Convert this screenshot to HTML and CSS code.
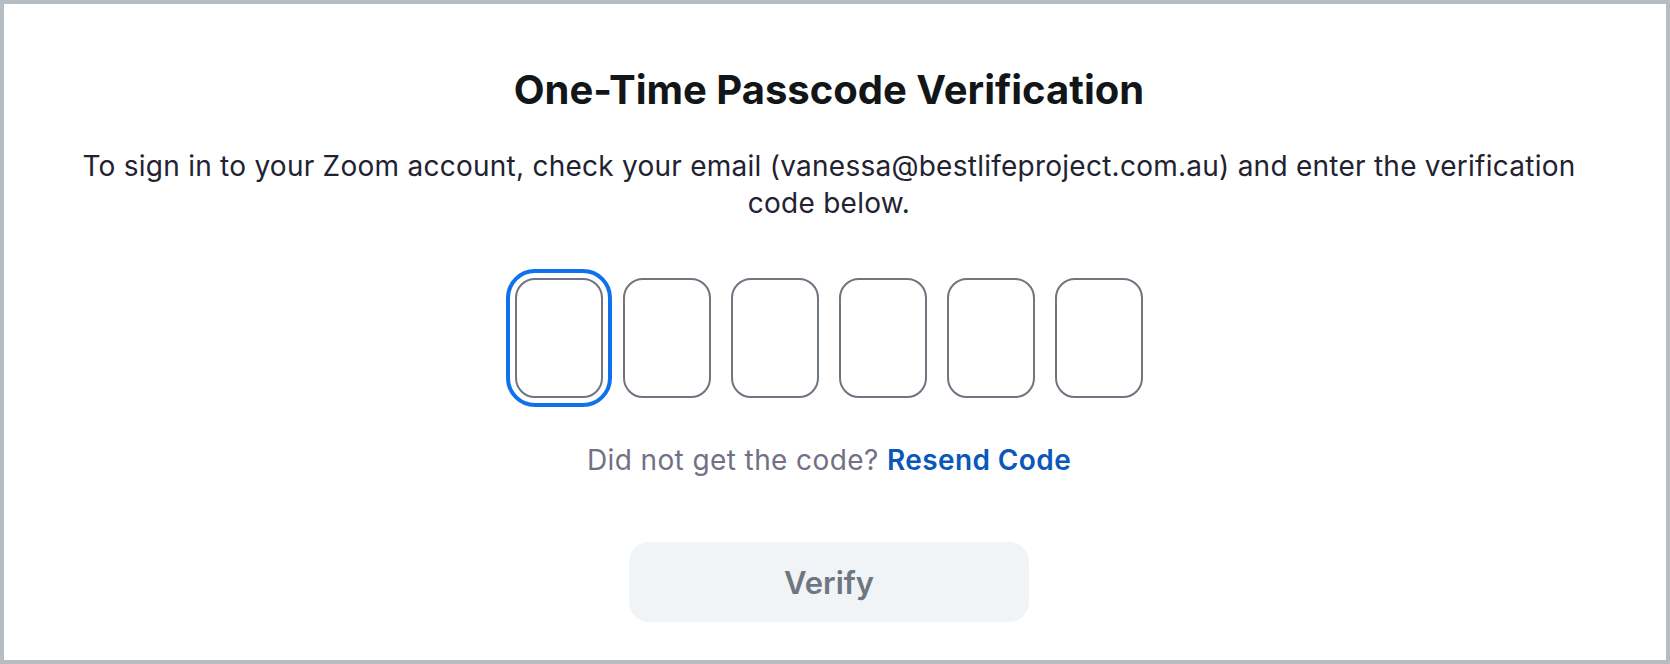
FILE: index.html
```html
<!DOCTYPE html>
<html lang="en">
<head>
<meta charset="utf-8">
<title>One-Time Passcode Verification</title>
<link rel="stylesheet" href="styles.css">
</head>
<body>
<div class="frame">
  <main class="content">
    <h1 class="title">One-Time Passcode Verification</h1>
    <p class="desc">To sign in to your Zoom account, check your email (vanessa@bestlifeproject.com.au) and enter the verification code below.</p>
    <div class="otp">
      <input class="otp-box is-focused" type="text" maxlength="1" aria-label="Digit 1">
      <input class="otp-box" type="text" maxlength="1" aria-label="Digit 2">
      <input class="otp-box" type="text" maxlength="1" aria-label="Digit 3">
      <input class="otp-box" type="text" maxlength="1" aria-label="Digit 4">
      <input class="otp-box" type="text" maxlength="1" aria-label="Digit 5">
      <input class="otp-box" type="text" maxlength="1" aria-label="Digit 6">
    </div>
    <p class="resend">Did not get the code? <a class="resend-link" href="#">Resend Code</a></p>
    <button class="verify" type="button" disabled>Verify</button>
  </main>
</div>
</body>
</html>
```

FILE: styles.css
```css
* { box-sizing: border-box; }
html, body { margin: 0; padding: 0; background: #ffffff; }
body { font-family: Inter, "Noto Sans", "Liberation Sans", sans-serif; }

.frame {
  width: 1670px;
  height: 664px;
  border: 4px solid #b5bcc2;
  background: #ffffff;
  overflow: hidden;
}

.content {
  display: flex;
  flex-direction: column;
  align-items: center;
  padding: 62px 12px 0 0;
}

.title {
  margin: 0;
  font-size: 40px;
  line-height: 48px;
  font-weight: 700;
  color: #131619;
  text-align: center;
}

.desc {
  margin: 34px 0 0;
  max-width: 1540px;
  font-size: 28px;
  line-height: 37px;
  font-weight: 400;
  letter-spacing: 0.25px;
  color: #222230;
  text-align: center;
}

.otp {
  display: flex;
  gap: 20px;
  margin-top: 56px;
}

.otp-box {
  width: 88px;
  height: 120px;
  border: 2px solid #6e7680;
  border-radius: 20px;
  background: #ffffff;
  padding: 0;
  font: inherit;
  outline: none;
}

.otp-box.is-focused {
  outline: 4px solid #0e72ed;
  outline-offset: 5px;
  border-radius: 20px;
}

.resend {
  margin: 45px 0 0;
  font-size: 28px;
  line-height: 34px;
  letter-spacing: 0.4px;
  color: #717186;
  text-align: center;
}

.resend-link {
  color: #0a58b9;
  font-weight: 600;
  text-decoration: none;
}

.verify {
  margin-top: 65px;
  width: 400px;
  height: 80px;
  border: none;
  border-radius: 20px;
  background: #f1f4f6;
  color: #6e7680;
  font-family: inherit;
  font-size: 31px;
  font-weight: 600;
  cursor: default;
}
```
